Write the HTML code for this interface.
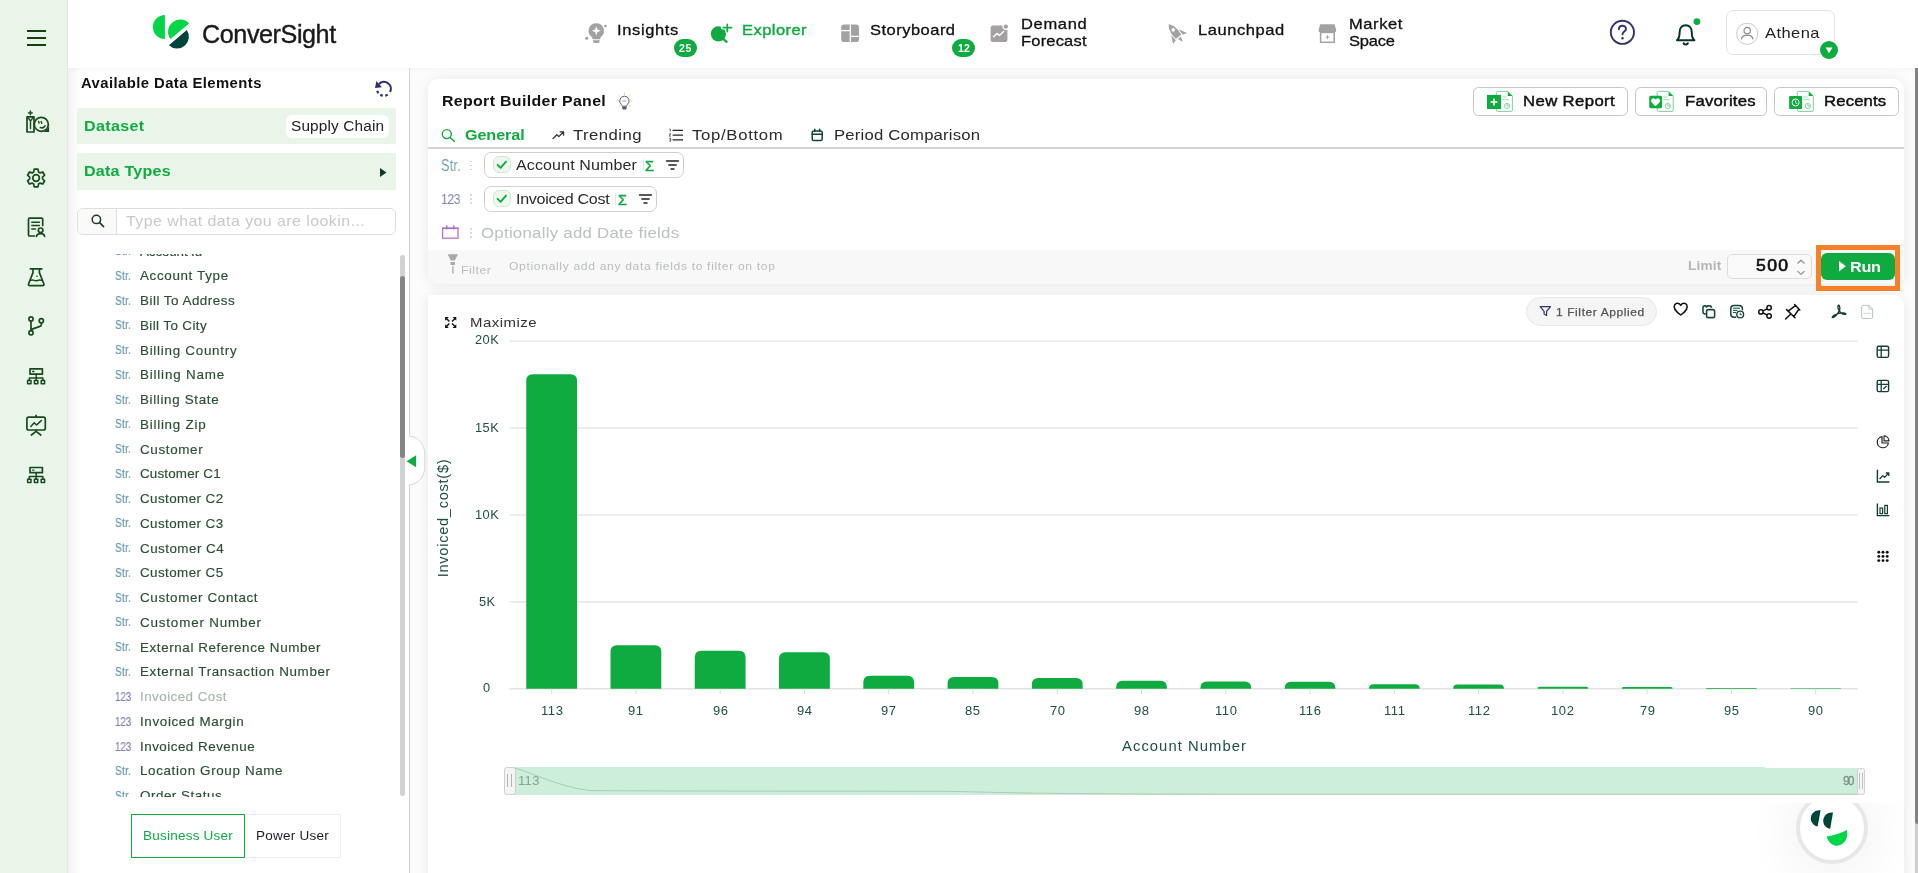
<!DOCTYPE html>
<html lang="en"><head><meta charset="utf-8"><title>ConverSight</title>
<style>
*{box-sizing:border-box;margin:0;padding:0}
html,body{width:1918px;height:873px;overflow:hidden;background:#fff;font-family:"Liberation Sans",sans-serif;color:#111}
.abs{position:absolute}
.t{position:absolute;white-space:nowrap;will-change:transform}
svg{overflow:visible}
</style></head><body>
<div id="app" style="position:absolute;left:0;top:0;width:1918px;height:873px;overflow:hidden">
<div class="abs " style="left:410.00px;top:68.00px;width:1508.00px;height:805.00px;background:#fcfcfc;"></div>
<div class="abs " style="left:68.00px;top:0.00px;width:1850.00px;height:68.00px;background:#fff;"></div>
<div class="abs " style="left:0.00px;top:0.00px;width:68.00px;height:873.00px;background:#eaf5ea;border-right:1px solid #dfeadf;z-index:3;"></div>
<div class="abs " style="left:68.00px;top:68.00px;width:342.00px;height:805.00px;background:#fff;border-right:1px solid #d6d6d6;"></div>
<div class="abs " style="left:68.00px;top:68.00px;width:13.00px;height:805.00px;background:linear-gradient(90deg,rgba(0,0,0,0.05),rgba(0,0,0,0));"></div>
<div class="abs " style="left:68.00px;top:68.00px;width:1850.00px;height:5.00px;background:linear-gradient(180deg,rgba(0,0,0,0.022),rgba(0,0,0,0));"></div>
<div class="abs " style="left:27.00px;top:29.50px;width:18.50px;height:2.00px;background:#14420f;z-index:4;"></div>
<div class="abs " style="left:27.00px;top:36.80px;width:18.50px;height:2.00px;background:#14420f;z-index:4;"></div>
<div class="abs " style="left:27.00px;top:44.00px;width:18.50px;height:2.00px;background:#14420f;z-index:4;"></div>
<svg class="abs" style="left:0.00px;top:0.00px;z-index:4;" width="68.00" height="873.00" viewBox="0 0 68 873" fill="none"><path d="M30.4 110.4 L31.1 112.2 L32.9 112.9 L31.1 113.6 L30.4 115.4 L29.7 113.6 L27.9 112.9 L29.7 112.2 Z" fill="#164a1d" stroke="#164a1d" stroke-width="0.6"/><rect x="27" y="116.8" width="7" height="15.2" stroke="#164a1d"  stroke-linecap="round" stroke-linejoin="round" fill="none" stroke-width="1.7"/><path d="M28 117.6 L30.5 121 L33 117.6 M30.5 121.6 V128.6" stroke="#164a1d"  stroke-linecap="round" stroke-linejoin="round" fill="none" stroke-width="1.4"/><circle cx="41.3" cy="124.3" r="7" stroke="#164a1d" stroke-width="1.7" stroke-linecap="round" stroke-linejoin="round" fill="none"/><path d="M49.1 124.3 V132 H41.3 A7.8 7.8 0 0 0 49.1 124.3 Z" fill="#164a1d"/><path d="M40.4 127.6 C42 128.2 44 127.6 45 125.8" stroke="#164a1d"  stroke-linecap="round" stroke-linejoin="round" fill="none" stroke-width="1.6"/><path d="M38.6 121.4 l0.5 1.6 M41.2 121.6 l0.5 1.6" stroke="#164a1d"  stroke-linecap="round" stroke-linejoin="round" fill="none" stroke-width="1.5"/><path d="M33.69 171.96 L34.23 169.20 L37.97 169.20 L38.51 171.96 L40.12 172.90 L42.79 171.98 L44.66 175.22 L42.53 177.07 L42.53 178.93 L44.66 180.78 L42.79 184.02 L40.12 183.10 L38.51 184.04 L37.97 186.80 L34.23 186.80 L33.69 184.04 L32.08 183.10 L29.41 184.02 L27.54 180.78 L29.67 178.93 L29.67 177.07 L27.54 175.22 L29.41 171.98 L32.08 172.90 Z" stroke="#164a1d" stroke-width="1.7" stroke-linecap="round" stroke-linejoin="round" fill="none"/><circle cx="36.1" cy="178" r="3.3" stroke="#164a1d" stroke-width="1.7" stroke-linecap="round" stroke-linejoin="round" fill="none"/><path d="M34.5 236 H29.6 Q28.5 236 28.5 234.9 V219.3 Q28.5 218.2 29.6 218.2 H41.6 Q42.7 218.2 42.7 219.3 V225.5" stroke="#164a1d" stroke-width="1.7" stroke-linecap="round" stroke-linejoin="round" fill="none"/><path d="M31.8 222.3 H39.4 M31.8 225.6 H39.4 M31.8 228.9 H35.4" stroke="#164a1d"  stroke-linecap="round" stroke-linejoin="round" fill="none" stroke-width="1.5"/><circle cx="40.6" cy="230.3" r="2.3" stroke="#164a1d" stroke-width="1.7" stroke-linecap="round" stroke-linejoin="round" fill="none"/><path d="M36.6 236.4 C36.8 232.6 44.4 232.6 44.6 236.4" stroke="#164a1d" stroke-width="1.7" stroke-linecap="round" stroke-linejoin="round" fill="none"/><path d="M30.4 268.9 H41.8 M33 269.2 V272.6 L28.6 283.8 Q28.1 285.6 29.9 285.6 H42.5 Q44.3 285.6 43.8 283.8 L39.4 272.6 V269.2" stroke="#164a1d" stroke-width="1.7" stroke-linecap="round" stroke-linejoin="round" fill="none"/><circle cx="37" cy="276.2" r="0.8" fill="#164a1d"/><path d="M30.6 280.4 C33 278.8 35 281.6 37.2 280.6 C38.8 279.8 40 279.6 41.6 280.4" stroke="#164a1d"  stroke-linecap="round" stroke-linejoin="round" fill="none" stroke-width="1.5"/><circle cx="31" cy="318.9" r="2.1" stroke="#164a1d" stroke-width="1.7" stroke-linecap="round" stroke-linejoin="round" fill="none"/><circle cx="31" cy="332.8" r="2.1" stroke="#164a1d" stroke-width="1.7" stroke-linecap="round" stroke-linejoin="round" fill="none"/><circle cx="41.3" cy="320.7" r="2.1" stroke="#164a1d" stroke-width="1.7" stroke-linecap="round" stroke-linejoin="round" fill="none"/><path d="M31 321 V330.7 M41.4 323 V324.6 Q41.4 326 40 326.4 L31.4 329.4" stroke="#164a1d" stroke-width="1.7" stroke-linecap="round" stroke-linejoin="round" fill="none"/><g transform="translate(0 0.0)"><rect x="30" y="368.9" width="12.4" height="5.2" stroke="#164a1d" stroke-width="1.7" stroke-linecap="round" stroke-linejoin="round" fill="none"/><path d="M32.6 371.5 h1.4" stroke="#164a1d"  stroke-linecap="round" stroke-linejoin="round" fill="none" stroke-width="1.3"/><path d="M36.2 374.2 V378 M29.3 380.4 V378 H42.9 V380.4 M36.1 378 V380.4" stroke="#164a1d"  stroke-linecap="round" stroke-linejoin="round" fill="none" stroke-width="1.5"/><rect x="27.6" y="380.6" width="3.4" height="3.2" stroke="#164a1d"  stroke-linecap="round" stroke-linejoin="round" fill="none" stroke-width="1.5"/><rect x="34.4" y="380.6" width="3.4" height="3.2" stroke="#164a1d"  stroke-linecap="round" stroke-linejoin="round" fill="none" stroke-width="1.5"/><rect x="41.2" y="380.6" width="3.4" height="3.2" stroke="#164a1d"  stroke-linecap="round" stroke-linejoin="round" fill="none" stroke-width="1.5"/></g><g transform="translate(0 98.6)"><rect x="30" y="368.9" width="12.4" height="5.2" stroke="#164a1d" stroke-width="1.7" stroke-linecap="round" stroke-linejoin="round" fill="none"/><path d="M32.6 371.5 h1.4" stroke="#164a1d"  stroke-linecap="round" stroke-linejoin="round" fill="none" stroke-width="1.3"/><path d="M36.2 374.2 V378 M29.3 380.4 V378 H42.9 V380.4 M36.1 378 V380.4" stroke="#164a1d"  stroke-linecap="round" stroke-linejoin="round" fill="none" stroke-width="1.5"/><rect x="27.6" y="380.6" width="3.4" height="3.2" stroke="#164a1d"  stroke-linecap="round" stroke-linejoin="round" fill="none" stroke-width="1.5"/><rect x="34.4" y="380.6" width="3.4" height="3.2" stroke="#164a1d"  stroke-linecap="round" stroke-linejoin="round" fill="none" stroke-width="1.5"/><rect x="41.2" y="380.6" width="3.4" height="3.2" stroke="#164a1d"  stroke-linecap="round" stroke-linejoin="round" fill="none" stroke-width="1.5"/></g><rect x="26.9" y="417.2" width="18.4" height="12.8" rx="1.8" stroke="#164a1d" stroke-width="1.7" stroke-linecap="round" stroke-linejoin="round" fill="none"/><path d="M36.1 415.4 V417 M36.1 430 V431.6 M31.4 435 L36.1 431.4 L40.8 435" stroke="#164a1d" stroke-width="1.7" stroke-linecap="round" stroke-linejoin="round" fill="none"/><path d="M30.8 426.4 L34.2 422.8 L36.6 425 L41.2 420.6" stroke="#164a1d"  stroke-linecap="round" stroke-linejoin="round" fill="none" stroke-width="1.5"/></svg>
<svg class="abs" style="left:150.00px;top:12.00px;" width="40.00" height="40.00" viewBox="0 0 40 40" fill="none"><path d="M14.9 2.9 A12.05 12.05 0 0 0 14.9 27 Z" fill="#04d648"/><path d="M20.4 27 A12.2 12.2 0 0 1 39.1 11.4 Z" fill="#04d648"/><path d="M36.8 18.1 A11.8 11.8 0 0 1 18.9 33.3 Z" fill="#00443a"/></svg>
<div class="t " style="left:201.70px;top:21.57px;font-size:25.20px;line-height:25.20px;color:#1a1a1a;letter-spacing:-0.443px;-webkit-text-stroke:0.40px #1a1a1a;">ConverSight</div>
<div class="t " style="left:617.00px;top:22.20px;font-size:15.00px;line-height:15.00px;color:#111;letter-spacing:0.579px;-webkit-text-stroke:0.30px #111;transform:scaleX(1.100);transform-origin:0 0;">Insights</div>
<div class="t " style="left:742.30px;top:22.20px;font-size:15.00px;line-height:15.00px;color:#10ab40;letter-spacing:0.407px;-webkit-text-stroke:0.40px #10ab40;transform:scaleX(1.100);transform-origin:0 0;">Explorer</div>
<div class="t " style="left:870.40px;top:22.20px;font-size:15.00px;line-height:15.00px;color:#111;letter-spacing:0.436px;-webkit-text-stroke:0.30px #111;transform:scaleX(1.100);transform-origin:0 0;">Storyboard</div>
<div class="t " style="left:1020.50px;top:16.40px;font-size:15.00px;line-height:15.00px;color:#111;letter-spacing:0.605px;-webkit-text-stroke:0.30px #111;transform:scaleX(1.100);transform-origin:0 0;">Demand</div>
<div class="t " style="left:1020.50px;top:33.30px;font-size:15.00px;line-height:15.00px;color:#111;letter-spacing:0.171px;-webkit-text-stroke:0.30px #111;transform:scaleX(1.100);transform-origin:0 0;">Forecast</div>
<div class="t " style="left:1197.90px;top:22.20px;font-size:15.00px;line-height:15.00px;color:#111;letter-spacing:0.526px;-webkit-text-stroke:0.30px #111;transform:scaleX(1.100);transform-origin:0 0;">Launchpad</div>
<div class="t " style="left:1348.60px;top:16.40px;font-size:15.00px;line-height:15.00px;color:#111;letter-spacing:0.526px;-webkit-text-stroke:0.30px #111;transform:scaleX(1.100);transform-origin:0 0;">Market</div>
<div class="t " style="left:1348.60px;top:33.30px;font-size:15.00px;line-height:15.00px;color:#111;letter-spacing:-0.222px;-webkit-text-stroke:0.30px #111;transform:scaleX(1.100);transform-origin:0 0;">Space</div>
<svg class="abs" style="left:0.00px;top:0.00px;" width="1918.00" height="68.00" viewBox="0 0 1918 68" fill="none"><path d="M596.3 23.2 A7.6 7.6 0 0 0 591.2 36.5 C592.2 37.5 592.6 38.3 592.7 39.3 H599.9 C600 38.3 600.4 37.5 601.4 36.5 A7.6 7.6 0 0 0 596.3 23.2 Z" fill="#a3a1a2"/><path d="M592.9 40.3 H599.7 V41 Q599.7 42.9 597.8 42.9 H594.8 Q592.9 42.9 592.9 41 Z" fill="#a3a1a2"/><path d="M596.3 26.2 L597.5 29.6 L600.9 30.8 L597.5 32 L596.3 35.4 L595.1 32 L591.7 30.8 L595.1 29.6 Z" fill="#fff"/><circle cx="605.4" cy="26" r="1.35" fill="#a3a1a2"/><circle cx="586.7" cy="38.2" r="1.55" fill="#a3a1a2"/><circle cx="718.4" cy="33.8" r="7.6" fill="#10ab40"/><path d="M723 38.6 L726.6 41.8" stroke="#10ab40" stroke-width="2.4" stroke-linecap="round"/><path d="M727.3 24 V32 M722.6 27.6 H732" stroke="#fff" stroke-width="3.6" stroke-linecap="round"/><path d="M727.3 24.4 V31.6 M723.2 27.6 H731.6" stroke="#10ab40" stroke-width="1.7" stroke-linecap="round"/><rect x="841.2" y="24.4" width="17.8" height="17.6" rx="2.8" fill="#a3a1a2"/><path d="M850.3 24.4 V42 M841.2 30.7 H850.3 M850.3 36.4 H859" stroke="#fff" stroke-width="1.3"/><rect x="990.6" y="25.4" width="16.8" height="16.6" rx="2.6" fill="#a3a1a2"/><circle cx="1005.8" cy="26.6" r="3.4" fill="#fff"/><circle cx="1005.8" cy="26.6" r="2.2" fill="#a3a1a2"/><path d="M993.6 36.8 L997 33.4 L999.4 35.4 L1003.6 31.4" stroke="#fff" stroke-width="1.4" fill="none" stroke-linecap="round" stroke-linejoin="round"/><g transform="translate(1175.9 33.3) rotate(-38)"><path d="M0 -11.6 C3.7 -8 4.3 -1 3.3 4.4 H-3.3 C-4.3 -1 -3.7 -8 0 -11.6 Z" fill="#a3a1a2"/><circle cx="0" cy="-4.4" r="1.75" fill="#fff"/><path d="M-4.7 -1.4 L-8.8 6.6 L-4.4 5.4 Z M4.7 -1.4 L8.8 6.6 L4.4 5.4 Z M-1.9 5.8 H1.9 L0.4 10.2 H-0.4 Z" fill="#a3a1a2"/></g><path d="M1320.3 24.2 H1334.5 L1336.1 29.4 V31 Q1336.1 32.2 1334.9 32.2 H1319.9 Q1318.7 32.2 1318.7 31 V29.4 Z" fill="#a3a1a2"/><rect x="1320.6" y="32.4" width="13.6" height="9.9" stroke="#a3a1a2" stroke-width="1.5" fill="none"/><path d="M1327.4 34.6 L1328 36.6 L1330 37.2 L1328 37.8 L1327.4 39.8 L1326.8 37.8 L1324.8 37.2 L1326.8 36.6 Z" fill="#a3a1a2"/><circle cx="1622.4" cy="32.3" r="11.6" stroke="#2e3470" stroke-width="1.9" fill="none"/><path d="M1618.9 29.3 C1618.9 24.6 1626 24.6 1626 29 C1626 31.6 1622.5 31.6 1622.5 34.4" stroke="#2e3470" stroke-width="1.9" fill="none" stroke-linecap="round"/><circle cx="1622.5" cy="38.2" r="1.2" fill="#2e3470"/><path d="M1677 40.2 C1679.4 38 1679.6 36 1679.6 32.4 C1679.6 28 1682 25.2 1685.7 25.2 C1689.4 25.2 1691.8 28 1691.8 32.4 C1691.8 36 1692 38 1694.4 40.2 Z" stroke="#0a3328" stroke-width="2" fill="none" stroke-linejoin="round"/><path d="M1683.6 43.4 C1684.6 45 1686.8 45 1687.8 43.4" stroke="#0a3328" stroke-width="2" fill="none" stroke-linecap="round"/><circle cx="1696.9" cy="21.6" r="3.4" fill="#10ab40"/></svg>
<div class="abs " style="left:674.40px;top:39.00px;width:22.50px;height:17.70px;background:#10ab40;border-radius:9px;"></div>
<div class="t " style="left:679.40px;top:42.81px;font-size:10.50px;line-height:10.50px;color:#fff;font-weight:700;letter-spacing:0.745px;">25</div>
<div class="abs " style="left:952.20px;top:39.00px;width:22.50px;height:17.70px;background:#10ab40;border-radius:9px;"></div>
<div class="t " style="left:957.60px;top:42.81px;font-size:10.50px;line-height:10.50px;color:#fff;font-weight:700;letter-spacing:0.145px;">12</div>
<div class="abs " style="left:1726.40px;top:10.30px;width:108.40px;height:44.50px;border:1px solid #e2e2e2;border-radius:7px;background:#fff;"></div>
<svg class="abs" style="left:1735.00px;top:22.00px;" width="24.00" height="24.00" viewBox="0 0 24 24" fill="none"><circle cx="12.2" cy="11.8" r="10.6" stroke="#c4c4c4" stroke-width="0.9"/><circle cx="12.2" cy="8.6" r="3.2" stroke="#8d8d8d" stroke-width="1.2"/><path d="M6.4 17.4 C6.8 11.6 17.6 11.6 18 17.4" stroke="#8d8d8d" stroke-width="1.2"/></svg>
<div class="t " style="left:1764.80px;top:25.40px;font-size:15.00px;line-height:15.00px;color:#222;letter-spacing:0.384px;transform:scaleX(1.100);transform-origin:0 0;">Athena</div>
<div class="abs " style="left:1820.00px;top:40.90px;width:18.00px;height:18.00px;background:#10ab40;border-radius:50%;"></div>
<svg class="abs" style="left:1820.00px;top:40.90px;" width="18.00" height="18.00" viewBox="0 0 18 18" fill="none"><path d="M5.6 6.6 h6.8 L9 12.2 Z" fill="#fff"/></svg>
<div class="t " style="left:81.00px;top:75.95px;font-size:14.00px;line-height:14.00px;color:#111;font-weight:700;letter-spacing:0.402px;transform:scaleX(1.060);transform-origin:0 0;">Available Data Elements</div>
<svg class="abs" style="left:375.00px;top:80.00px;" width="18.00" height="18.00" viewBox="0 0 18 18" fill="none"><path d="M3.99 3.89 A6.95 6.95 0 0 1 15.04 12.06" stroke="#2b3170" stroke-width="2.1" fill="none"/><path d="M12.69 14.63 A6.95 6.95 0 0 1 10.23 15.62" stroke="#2b3170" stroke-width="2.1" fill="none"/><path d="M7.81 15.66 A6.95 6.95 0 0 1 5.32 14.76" stroke="#2b3170" stroke-width="2.1" fill="none"/><path d="M3.50 13.17 A6.95 6.95 0 0 1 2.25 10.83" stroke="#2b3170" stroke-width="2.1" fill="none"/><path d="M1.4 1 L0 7.9 L6.9 7.2 Z" fill="#2b3170"/></svg>
<div class="abs " style="left:77.00px;top:108.00px;width:319.00px;height:36.00px;background:#eaf5ea;"></div>
<div class="t " style="left:83.70px;top:118.23px;font-size:15.20px;line-height:15.20px;color:#10ab40;font-weight:700;letter-spacing:0.323px;transform:scaleX(1.060);transform-origin:0 0;">Dataset</div>
<div class="abs " style="left:286.00px;top:115.00px;width:103.00px;height:23.00px;background:#fff;border-radius:6px;"></div>
<div class="t " style="left:291.20px;top:119.15px;font-size:14.00px;line-height:14.00px;color:#222;letter-spacing:0.121px;transform:scaleX(1.100);transform-origin:0 0;">Supply Chain</div>
<div class="abs " style="left:77.00px;top:153.00px;width:319.00px;height:37.00px;background:#eaf5ea;"></div>
<div class="t " style="left:83.70px;top:163.23px;font-size:15.20px;line-height:15.20px;color:#10ab40;font-weight:700;letter-spacing:0.215px;transform:scaleX(1.060);transform-origin:0 0;">Data Types</div>
<svg class="abs" style="left:380.00px;top:168.00px;" width="6.50" height="9.00" viewBox="0 0 6.5 9" fill="none"><path d="M0 0 L6.5 4.5 L0 9 Z" fill="#0b3b2c"/></svg>
<div class="abs " style="left:77.20px;top:208.40px;width:318.50px;height:26.20px;border:1px solid #dedede;border-radius:6px;background:#fff;overflow:hidden;"><div style="position:absolute;left:0;top:0;width:39px;height:100%;background:#fafafa;border-right:1px solid #dedede"></div></div>
<svg class="abs" style="left:90.50px;top:214.30px;" width="13.50" height="13.50" viewBox="0 0 13.5 13.5" fill="none"><circle cx="5.4" cy="5.4" r="4.2" stroke="#1d3b1d" stroke-width="1.5"/><path d="M8.6 8.6 L12.6 12.6" stroke="#1d3b1d" stroke-width="1.6" stroke-linecap="round"/></svg>
<div class="t " style="left:126.00px;top:213.73px;font-size:14.50px;line-height:14.50px;color:#c9c9c9;letter-spacing:0.395px;transform:scaleX(1.100);transform-origin:0 0;">Type what data you are lookin...</div>
<div class="abs" style="left:100px;top:254.2px;width:298px;height:542.8px;overflow:hidden">
<div class="t " style="left:14.70px;top:-8.99px;font-size:12.80px;line-height:12.80px;color:#6298b0;letter-spacing:0.308px;-webkit-text-stroke:0.15px #6298b0;transform:scaleX(0.800);transform-origin:0 0;">Str.</div>
<div class="t " style="left:39.80px;top:-8.48px;font-size:12.20px;line-height:12.20px;color:#2a4f33;letter-spacing:-0.122px;-webkit-text-stroke:0.15px #2a4f33;transform:scaleX(1.100);transform-origin:0 0;">Account Id</div>
<div class="t " style="left:14.70px;top:15.76px;font-size:12.80px;line-height:12.80px;color:#6298b0;letter-spacing:0.308px;-webkit-text-stroke:0.15px #6298b0;transform:scaleX(0.800);transform-origin:0 0;">Str.</div>
<div class="t " style="left:39.80px;top:16.27px;font-size:12.20px;line-height:12.20px;color:#2a4f33;letter-spacing:0.590px;-webkit-text-stroke:0.15px #2a4f33;transform:scaleX(1.100);transform-origin:0 0;">Account Type</div>
<div class="t " style="left:14.70px;top:40.51px;font-size:12.80px;line-height:12.80px;color:#6298b0;letter-spacing:0.308px;-webkit-text-stroke:0.15px #6298b0;transform:scaleX(0.800);transform-origin:0 0;">Str.</div>
<div class="t " style="left:39.80px;top:41.02px;font-size:12.20px;line-height:12.20px;color:#2a4f33;letter-spacing:0.450px;-webkit-text-stroke:0.15px #2a4f33;transform:scaleX(1.100);transform-origin:0 0;">Bill To Address</div>
<div class="t " style="left:14.70px;top:65.26px;font-size:12.80px;line-height:12.80px;color:#6298b0;letter-spacing:0.308px;-webkit-text-stroke:0.15px #6298b0;transform:scaleX(0.800);transform-origin:0 0;">Str.</div>
<div class="t " style="left:39.80px;top:65.77px;font-size:12.20px;line-height:12.20px;color:#2a4f33;letter-spacing:0.355px;-webkit-text-stroke:0.15px #2a4f33;transform:scaleX(1.100);transform-origin:0 0;">Bill To City</div>
<div class="t " style="left:14.70px;top:90.01px;font-size:12.80px;line-height:12.80px;color:#6298b0;letter-spacing:0.308px;-webkit-text-stroke:0.15px #6298b0;transform:scaleX(0.800);transform-origin:0 0;">Str.</div>
<div class="t " style="left:39.80px;top:90.52px;font-size:12.20px;line-height:12.20px;color:#2a4f33;letter-spacing:0.659px;-webkit-text-stroke:0.15px #2a4f33;transform:scaleX(1.100);transform-origin:0 0;">Billing Country</div>
<div class="t " style="left:14.70px;top:114.76px;font-size:12.80px;line-height:12.80px;color:#6298b0;letter-spacing:0.308px;-webkit-text-stroke:0.15px #6298b0;transform:scaleX(0.800);transform-origin:0 0;">Str.</div>
<div class="t " style="left:39.80px;top:115.27px;font-size:12.20px;line-height:12.20px;color:#2a4f33;letter-spacing:0.731px;-webkit-text-stroke:0.15px #2a4f33;transform:scaleX(1.100);transform-origin:0 0;">Billing Name</div>
<div class="t " style="left:14.70px;top:139.51px;font-size:12.80px;line-height:12.80px;color:#6298b0;letter-spacing:0.308px;-webkit-text-stroke:0.15px #6298b0;transform:scaleX(0.800);transform-origin:0 0;">Str.</div>
<div class="t " style="left:39.80px;top:140.02px;font-size:12.20px;line-height:12.20px;color:#2a4f33;letter-spacing:0.594px;-webkit-text-stroke:0.15px #2a4f33;transform:scaleX(1.100);transform-origin:0 0;">Billing State</div>
<div class="t " style="left:14.70px;top:164.26px;font-size:12.80px;line-height:12.80px;color:#6298b0;letter-spacing:0.308px;-webkit-text-stroke:0.15px #6298b0;transform:scaleX(0.800);transform-origin:0 0;">Str.</div>
<div class="t " style="left:39.80px;top:164.77px;font-size:12.20px;line-height:12.20px;color:#2a4f33;letter-spacing:0.684px;-webkit-text-stroke:0.15px #2a4f33;transform:scaleX(1.100);transform-origin:0 0;">Billing Zip</div>
<div class="t " style="left:14.70px;top:189.01px;font-size:12.80px;line-height:12.80px;color:#6298b0;letter-spacing:0.308px;-webkit-text-stroke:0.15px #6298b0;transform:scaleX(0.800);transform-origin:0 0;">Str.</div>
<div class="t " style="left:39.80px;top:189.52px;font-size:12.20px;line-height:12.20px;color:#2a4f33;letter-spacing:0.588px;-webkit-text-stroke:0.15px #2a4f33;transform:scaleX(1.100);transform-origin:0 0;">Customer</div>
<div class="t " style="left:14.70px;top:213.76px;font-size:12.80px;line-height:12.80px;color:#6298b0;letter-spacing:0.308px;-webkit-text-stroke:0.15px #6298b0;transform:scaleX(0.800);transform-origin:0 0;">Str.</div>
<div class="t " style="left:39.80px;top:214.27px;font-size:12.20px;line-height:12.20px;color:#2a4f33;letter-spacing:0.151px;-webkit-text-stroke:0.15px #2a4f33;transform:scaleX(1.100);transform-origin:0 0;">Customer C1</div>
<div class="t " style="left:14.70px;top:238.51px;font-size:12.80px;line-height:12.80px;color:#6298b0;letter-spacing:0.308px;-webkit-text-stroke:0.15px #6298b0;transform:scaleX(0.800);transform-origin:0 0;">Str.</div>
<div class="t " style="left:39.80px;top:239.02px;font-size:12.20px;line-height:12.20px;color:#2a4f33;letter-spacing:0.378px;-webkit-text-stroke:0.15px #2a4f33;transform:scaleX(1.100);transform-origin:0 0;">Customer C2</div>
<div class="t " style="left:14.70px;top:263.26px;font-size:12.80px;line-height:12.80px;color:#6298b0;letter-spacing:0.308px;-webkit-text-stroke:0.15px #6298b0;transform:scaleX(0.800);transform-origin:0 0;">Str.</div>
<div class="t " style="left:39.80px;top:263.77px;font-size:12.20px;line-height:12.20px;color:#2a4f33;letter-spacing:0.378px;-webkit-text-stroke:0.15px #2a4f33;transform:scaleX(1.100);transform-origin:0 0;">Customer C3</div>
<div class="t " style="left:14.70px;top:288.01px;font-size:12.80px;line-height:12.80px;color:#6298b0;letter-spacing:0.308px;-webkit-text-stroke:0.15px #6298b0;transform:scaleX(0.800);transform-origin:0 0;">Str.</div>
<div class="t " style="left:39.80px;top:288.52px;font-size:12.20px;line-height:12.20px;color:#2a4f33;letter-spacing:0.423px;-webkit-text-stroke:0.15px #2a4f33;transform:scaleX(1.100);transform-origin:0 0;">Customer C4</div>
<div class="t " style="left:14.70px;top:312.76px;font-size:12.80px;line-height:12.80px;color:#6298b0;letter-spacing:0.308px;-webkit-text-stroke:0.15px #6298b0;transform:scaleX(0.800);transform-origin:0 0;">Str.</div>
<div class="t " style="left:39.80px;top:313.27px;font-size:12.20px;line-height:12.20px;color:#2a4f33;letter-spacing:0.378px;-webkit-text-stroke:0.15px #2a4f33;transform:scaleX(1.100);transform-origin:0 0;">Customer C5</div>
<div class="t " style="left:14.70px;top:337.51px;font-size:12.80px;line-height:12.80px;color:#6298b0;letter-spacing:0.308px;-webkit-text-stroke:0.15px #6298b0;transform:scaleX(0.800);transform-origin:0 0;">Str.</div>
<div class="t " style="left:39.80px;top:338.02px;font-size:12.20px;line-height:12.20px;color:#2a4f33;letter-spacing:0.578px;-webkit-text-stroke:0.15px #2a4f33;transform:scaleX(1.100);transform-origin:0 0;">Customer Contact</div>
<div class="t " style="left:14.70px;top:362.26px;font-size:12.80px;line-height:12.80px;color:#6298b0;letter-spacing:0.308px;-webkit-text-stroke:0.15px #6298b0;transform:scaleX(0.800);transform-origin:0 0;">Str.</div>
<div class="t " style="left:39.80px;top:362.77px;font-size:12.20px;line-height:12.20px;color:#2a4f33;letter-spacing:0.751px;-webkit-text-stroke:0.15px #2a4f33;transform:scaleX(1.100);transform-origin:0 0;">Customer Number</div>
<div class="t " style="left:14.70px;top:387.01px;font-size:12.80px;line-height:12.80px;color:#6298b0;letter-spacing:0.308px;-webkit-text-stroke:0.15px #6298b0;transform:scaleX(0.800);transform-origin:0 0;">Str.</div>
<div class="t " style="left:39.80px;top:387.52px;font-size:12.20px;line-height:12.20px;color:#2a4f33;letter-spacing:0.544px;-webkit-text-stroke:0.15px #2a4f33;transform:scaleX(1.100);transform-origin:0 0;">External Reference Number</div>
<div class="t " style="left:14.70px;top:411.76px;font-size:12.80px;line-height:12.80px;color:#6298b0;letter-spacing:0.308px;-webkit-text-stroke:0.15px #6298b0;transform:scaleX(0.800);transform-origin:0 0;">Str.</div>
<div class="t " style="left:39.80px;top:412.27px;font-size:12.20px;line-height:12.20px;color:#2a4f33;letter-spacing:0.574px;-webkit-text-stroke:0.15px #2a4f33;transform:scaleX(1.100);transform-origin:0 0;">External Transaction Number</div>
<div class="t " style="left:14.70px;top:436.85px;font-size:12.40px;line-height:12.40px;color:#7f80b6;letter-spacing:-0.167px;-webkit-text-stroke:0.15px #7f80b6;transform:scaleX(0.800);transform-origin:0 0;">123</div>
<div class="t " style="left:39.80px;top:437.02px;font-size:12.20px;line-height:12.20px;color:#a9b7ab;letter-spacing:0.407px;-webkit-text-stroke:0.15px #a9b7ab;transform:scaleX(1.100);transform-origin:0 0;">Invoiced Cost</div>
<div class="t " style="left:14.70px;top:461.60px;font-size:12.40px;line-height:12.40px;color:#7f80b6;letter-spacing:-0.167px;-webkit-text-stroke:0.15px #7f80b6;transform:scaleX(0.800);transform-origin:0 0;">123</div>
<div class="t " style="left:39.80px;top:461.77px;font-size:12.20px;line-height:12.20px;color:#2a4f33;letter-spacing:0.581px;-webkit-text-stroke:0.15px #2a4f33;transform:scaleX(1.100);transform-origin:0 0;">Invoiced Margin</div>
<div class="t " style="left:14.70px;top:486.35px;font-size:12.40px;line-height:12.40px;color:#7f80b6;letter-spacing:-0.167px;-webkit-text-stroke:0.15px #7f80b6;transform:scaleX(0.800);transform-origin:0 0;">123</div>
<div class="t " style="left:39.80px;top:486.52px;font-size:12.20px;line-height:12.20px;color:#2a4f33;letter-spacing:0.441px;-webkit-text-stroke:0.15px #2a4f33;transform:scaleX(1.100);transform-origin:0 0;">Invoiced Revenue</div>
<div class="t " style="left:14.70px;top:510.76px;font-size:12.80px;line-height:12.80px;color:#6298b0;letter-spacing:0.308px;-webkit-text-stroke:0.15px #6298b0;transform:scaleX(0.800);transform-origin:0 0;">Str.</div>
<div class="t " style="left:39.80px;top:511.27px;font-size:12.20px;line-height:12.20px;color:#2a4f33;letter-spacing:0.575px;-webkit-text-stroke:0.15px #2a4f33;transform:scaleX(1.100);transform-origin:0 0;">Location Group Name</div>
<div class="t " style="left:14.70px;top:535.51px;font-size:12.80px;line-height:12.80px;color:#6298b0;letter-spacing:0.308px;-webkit-text-stroke:0.15px #6298b0;transform:scaleX(0.800);transform-origin:0 0;">Str.</div>
<div class="t " style="left:39.80px;top:536.02px;font-size:12.20px;line-height:12.20px;color:#2a4f33;letter-spacing:0.464px;-webkit-text-stroke:0.15px #2a4f33;transform:scaleX(1.100);transform-origin:0 0;">Order Status</div>
</div>
<div class="abs " style="left:400.00px;top:255.00px;width:5.00px;height:541.00px;background:#d2d2d2;border-radius:3px;"></div>
<div class="abs " style="left:400.00px;top:276.00px;width:5.00px;height:181.50px;background:#858585;border-radius:3px;"></div>
<svg class="abs" style="left:403.00px;top:430.00px;z-index:5;" width="30.00" height="60.00" viewBox="0 0 30 60" fill="none"><path d="M6.4 6.2 C16 6.2 21.8 16 21.8 24 V37 C21.8 45 16 54.7 6.4 54.7 Z" fill="#fff" stroke="#d6d6d6" stroke-width="1"/><path d="M6.4 6.8 V54.2" stroke="#fff" stroke-width="1.4"/><path d="M3.6 31.3 L13.1 25.3 V37.2 Z" fill="#10ab40"/></svg>
<div class="abs " style="left:131.00px;top:814.10px;width:113.90px;height:43.60px;border:1.8px solid #10ab40;background:#fff;"></div>
<div class="t " style="left:143.20px;top:830.19px;font-size:12.30px;line-height:12.30px;color:#10ab40;letter-spacing:0.197px;transform:scaleX(1.100);transform-origin:0 0;">Business User</div>
<div class="abs " style="left:244.90px;top:814.10px;width:96.00px;height:43.60px;border:1.8px solid #efefef;background:#fff;"></div>
<div class="t " style="left:256.00px;top:830.19px;font-size:12.30px;line-height:12.30px;color:#1e1e2a;letter-spacing:0.213px;transform:scaleX(1.100);transform-origin:0 0;">Power User</div>
<div class="abs " style="left:428.00px;top:79.30px;width:1476.00px;height:205.00px;background:#fff;border-radius:11px;box-shadow:0 1px 13px rgba(0,0,0,0.085);overflow:hidden;"><div style="position:absolute;left:0;top:170.8px;width:100%;height:34.2px;background:#f8f8f8"></div><div style="position:absolute;left:0;top:67.4px;width:100%;height:2px;background:#d3d3d3"></div></div>
<div class="t " style="left:441.50px;top:93.45px;font-size:15.30px;line-height:15.30px;color:#111;font-weight:700;letter-spacing:0.325px;transform:scaleX(1.040);transform-origin:0 0;">Report Builder Panel</div>
<svg class="abs" style="left:616.00px;top:92.00px;" width="18.00" height="20.00" viewBox="0 0 18 20" fill="none"><path d="M8.4 0.6 v1.8 M2.6 3.2 l1.3 1.3 M14.2 3.2 l-1.3 1.3 M0.6 8.8 h1.8 M14.4 8.8 h1.8 M2.8 14 l1.2 -1.2 M14 14 l-1.2 -1.2" stroke="#f3c79b" stroke-width="0.9" stroke-linecap="round"/><path d="M8.4 4.2 A4.7 4.7 0 0 0 5.4 12.5 C6 13.1 6.2 13.6 6.2 14.2 H10.6 C10.6 13.6 10.8 13.1 11.4 12.5 A4.7 4.7 0 0 0 8.4 4.2 Z" stroke="#666" stroke-width="1" fill="#fff"/><path d="M6.6 9 H10.2" stroke="#888" stroke-width="0.8"/><path d="M6.2 14.8 H10.6 V16 Q10.6 17.6 9 17.6 H7.8 Q6.2 17.6 6.2 16 Z" fill="#5a5a5a"/></svg>
<svg class="abs" style="left:0.00px;top:0.00px;" width="1918.00" height="300.00" viewBox="0 0 1918 300" fill="none"><circle cx="446.8" cy="134.1" r="4.5" stroke="#10ab40" stroke-width="1.4" fill="none"/><path d="M450.2 137.5 L454.2 141.2" stroke="#10ab40" stroke-width="1.5" stroke-linecap="round"/><path d="M553 138.6 L556.8 134.8 L558.8 136.6 L563.2 132.2 M560.2 131.8 H563.6 V135.2" stroke="#333" stroke-width="1.3" fill="none" stroke-linejoin="round" stroke-linecap="round"/><path d="M672.6 130.4 H683 M672.6 135.1 H683 M672.6 139.8 H683" stroke="#222" stroke-width="1.35"/><path d="M669.4 129 h0.9 v2.6 M669.2 133.8 h1.5 l-1.5 2.4 h1.6 M669.2 138.4 h1.5 v1.4 h-1 M670.7 139.8 v1.4 h-1.5" stroke="#222" stroke-width="0.7" fill="none"/><rect x="812.2" y="130.9" width="10" height="9.6" rx="1.6" stroke="#14443a" stroke-width="1.5" fill="none"/><path d="M812.2 134.3 H822.2 M814.8 129.2 V131.6 M819.6 129.2 V131.6" stroke="#14443a" stroke-width="1.5" stroke-linecap="round"/><rect x="442.6" y="228.2" width="15.4" height="10" stroke="#b06bc5" stroke-width="1.2" fill="none"/><path d="M442 227.6 H458.6 V229 H442 Z" fill="#b06bc5"/><path d="M446.8 225.2 V229.4 M453.8 225.2 V229.4" stroke="#b06bc5" stroke-width="1.3"/><path d="M447.6 254.2 H458 L454.8 260.6 H450.8 Z" fill="#a9a9a9"/><rect x="450.6" y="262" width="4.4" height="3" fill="#a9a9a9"/><rect x="452.1" y="266.2" width="1.5" height="7.4" fill="#b5b5b5"/></svg>
<div class="t " style="left:464.90px;top:127.13px;font-size:15.20px;line-height:15.20px;color:#10ab40;font-weight:700;letter-spacing:-0.050px;transform:scaleX(1.060);transform-origin:0 0;">General</div>
<div class="t " style="left:573.30px;top:127.13px;font-size:15.20px;line-height:15.20px;color:#2b2b2b;letter-spacing:0.406px;transform:scaleX(1.100);transform-origin:0 0;">Trending</div>
<div class="t " style="left:692.20px;top:127.13px;font-size:15.20px;line-height:15.20px;color:#2b2b2b;letter-spacing:0.626px;transform:scaleX(1.100);transform-origin:0 0;">Top/Bottom</div>
<div class="t " style="left:833.80px;top:127.13px;font-size:15.20px;line-height:15.20px;color:#2b2b2b;letter-spacing:0.175px;transform:scaleX(1.100);transform-origin:0 0;">Period Comparison</div>
<div class="t " style="left:440.70px;top:157.66px;font-size:16.00px;line-height:16.00px;color:#6a9fb2;letter-spacing:0.208px;transform:scaleX(0.800);transform-origin:0 0;">Str.</div>
<div class="t " style="left:440.70px;top:191.36px;font-size:15.40px;line-height:15.40px;color:#8486b8;letter-spacing:-0.672px;transform:scaleX(0.800);transform-origin:0 0;">123</div>
<div class="abs " style="left:470.10px;top:160.60px;width:1.80px;height:1.80px;background:#cfcfcf;border-radius:50%;"></div>
<div class="abs " style="left:470.10px;top:164.60px;width:1.80px;height:1.80px;background:#cfcfcf;border-radius:50%;"></div>
<div class="abs " style="left:470.10px;top:168.60px;width:1.80px;height:1.80px;background:#cfcfcf;border-radius:50%;"></div>
<div class="abs " style="left:470.10px;top:194.10px;width:1.80px;height:1.80px;background:#cfcfcf;border-radius:50%;"></div>
<div class="abs " style="left:470.10px;top:198.10px;width:1.80px;height:1.80px;background:#cfcfcf;border-radius:50%;"></div>
<div class="abs " style="left:470.10px;top:202.10px;width:1.80px;height:1.80px;background:#cfcfcf;border-radius:50%;"></div>
<div class="abs " style="left:470.10px;top:227.90px;width:1.80px;height:1.80px;background:#cfcfcf;border-radius:50%;"></div>
<div class="abs " style="left:470.10px;top:231.90px;width:1.80px;height:1.80px;background:#cfcfcf;border-radius:50%;"></div>
<div class="abs " style="left:470.10px;top:235.90px;width:1.80px;height:1.80px;background:#cfcfcf;border-radius:50%;"></div>
<div class="abs " style="left:484.30px;top:152.40px;width:199.60px;height:25.20px;border:1px solid #cfcfcf;border-radius:7px;background:#fff;"></div>
<div class="abs " style="left:484.30px;top:186.40px;width:172.60px;height:25.20px;border:1px solid #cfcfcf;border-radius:7px;background:#fff;"></div>
<div class="abs " style="left:493.10px;top:156.40px;width:17.60px;height:17.00px;border:1px solid #cdeacf;border-radius:6px;background:#eef8ef;"></div>
<svg class="abs" style="left:493.10px;top:156.40px;" width="17.60" height="17.00" viewBox="0 0 17.6 17" fill="none"><path d="M4.6 8.8 L7.6 11.8 L13 5.6" stroke="#10ab40" stroke-width="1.9" stroke-linecap="round" stroke-linejoin="round"/></svg>
<div class="abs " style="left:493.10px;top:190.40px;width:17.60px;height:17.00px;border:1px solid #cdeacf;border-radius:6px;background:#eef8ef;"></div>
<svg class="abs" style="left:493.10px;top:190.40px;" width="17.60" height="17.00" viewBox="0 0 17.6 17" fill="none"><path d="M4.6 8.8 L7.6 11.8 L13 5.6" stroke="#10ab40" stroke-width="1.9" stroke-linecap="round" stroke-linejoin="round"/></svg>
<div class="t " style="left:515.80px;top:158.04px;font-size:14.60px;line-height:14.60px;color:#2b2b2b;letter-spacing:0.095px;transform:scaleX(1.100);transform-origin:0 0;">Account Number</div>
<div class="t " style="left:515.80px;top:191.64px;font-size:14.60px;line-height:14.60px;color:#2b2b2b;letter-spacing:-0.275px;transform:scaleX(1.100);transform-origin:0 0;">Invoiced Cost</div>
<div class="t " style="left:644.80px;top:159.14px;font-size:14.60px;line-height:14.60px;color:#10ab40;letter-spacing:1.348px;-webkit-text-stroke:0.45px #10ab40;">Σ</div>
<div class="abs " style="left:642.60px;top:159.00px;width:1.00px;height:12.00px;background:#e4e4e4;"></div>
<div class="t " style="left:617.90px;top:192.74px;font-size:14.60px;line-height:14.60px;color:#10ab40;letter-spacing:1.448px;-webkit-text-stroke:0.45px #10ab40;">Σ</div>
<div class="abs " style="left:615.40px;top:193.00px;width:1.00px;height:12.00px;background:#e4e4e4;"></div>
<svg class="abs" style="left:666.20px;top:160.40px;" width="13.00" height="10.00" viewBox="0 0 13 10" fill="none"><path d="M0.5 1 H12.5 M2.8 5 H10.2 M5 9 H8" stroke="#222" stroke-width="1.35" stroke-linecap="round"/></svg>
<svg class="abs" style="left:638.80px;top:194.00px;" width="13.00" height="10.00" viewBox="0 0 13 10" fill="none"><path d="M0.5 1 H12.5 M2.8 5 H10.2 M5 9 H8" stroke="#222" stroke-width="1.35" stroke-linecap="round"/></svg>
<div class="t " style="left:480.70px;top:224.95px;font-size:15.30px;line-height:15.30px;color:#bcc2bd;letter-spacing:0.230px;transform:scaleX(1.100);transform-origin:0 0;">Optionally add Date fields</div>
<div class="t " style="left:460.80px;top:264.99px;font-size:11.00px;line-height:11.00px;color:#b9beba;letter-spacing:0.516px;transform:scaleX(1.100);transform-origin:0 0;">Filter</div>
<div class="t " style="left:509.10px;top:261.29px;font-size:11.00px;line-height:11.00px;color:#b9beba;letter-spacing:0.603px;transform:scaleX(1.100);transform-origin:0 0;">Optionally add any data fields to filter on top</div>
<div class="t " style="left:1688.40px;top:259.40px;font-size:13.00px;line-height:13.00px;color:#b5b5b5;font-weight:700;letter-spacing:0.161px;transform:scaleX(1.050);transform-origin:0 0;">Limit</div>
<div class="abs " style="left:1727.40px;top:254.30px;width:84.20px;height:24.60px;border:1px solid #dcdcdc;border-radius:5px;background:#f9f9f9;"></div>
<div class="t " style="left:1755.90px;top:258.26px;font-size:16.00px;line-height:16.00px;color:#111;letter-spacing:1.231px;-webkit-text-stroke:0.65px #111;transform:scaleX(1.100);transform-origin:0 0;">500</div>
<svg class="abs" style="left:1797.00px;top:258.00px;" width="8.00" height="18.00" viewBox="0 0 8 18" fill="none"><path d="M0.8 5.2 L4 2.2 L7.2 5.2 M0.8 13.4 L4 16.4 L7.2 13.4" stroke="#8f8f8f" stroke-width="1.2" stroke-linecap="round" stroke-linejoin="round"/></svg>
<div class="abs " style="left:1816.20px;top:244.80px;width:84.00px;height:46.00px;border:5px solid #f9802a;"></div>
<div class="abs " style="left:1821.30px;top:253.00px;width:74.20px;height:27.00px;background:#10ab40;border-radius:6px;"></div>
<svg class="abs" style="left:1839.00px;top:261.20px;" width="6.80" height="10.60" viewBox="0 0 6.8 10.6" fill="none"><path d="M0 0 L6.8 5.3 L0 10.6 Z" fill="#fff"/></svg>
<div class="t " style="left:1849.80px;top:259.16px;font-size:15.40px;line-height:15.40px;color:#fff;font-weight:700;letter-spacing:-0.215px;transform:scaleX(1.050);transform-origin:0 0;">Run</div>
<div class="abs " style="left:1473.30px;top:87.30px;width:154.40px;height:28.30px;border:1.4px solid #c6c6c6;border-radius:5.5px;background:#fff;"></div>
<div class="abs " style="left:1635.30px;top:87.30px;width:132.10px;height:28.30px;border:1.4px solid #c6c6c6;border-radius:5.5px;background:#fff;"></div>
<div class="abs " style="left:1774.10px;top:87.30px;width:124.70px;height:28.30px;border:1.4px solid #c6c6c6;border-radius:5.5px;background:#fff;"></div>
<div class="t " style="left:1522.90px;top:93.33px;font-size:15.20px;line-height:15.20px;color:#111;letter-spacing:0.355px;-webkit-text-stroke:0.45px #111;transform:scaleX(1.100);transform-origin:0 0;">New Report</div>
<div class="t " style="left:1684.50px;top:93.33px;font-size:15.20px;line-height:15.20px;color:#111;letter-spacing:0.214px;-webkit-text-stroke:0.45px #111;transform:scaleX(1.100);transform-origin:0 0;">Favorites</div>
<div class="t " style="left:1824.40px;top:93.33px;font-size:15.20px;line-height:15.20px;color:#111;letter-spacing:0.127px;-webkit-text-stroke:0.45px #111;transform:scaleX(1.100);transform-origin:0 0;">Recents</div>
<svg class="abs" style="left:0.00px;top:0.00px;" width="1918.00" height="120.00" viewBox="0 0 1918 120" fill="none"><path d="M1497.6 91.4 H1507.8 L1512.4 96 V110.2 Q1512.4 111.4 1511.2 111.4 H1497.6 Q1496.4 111.4 1496.4 110.2 V92.6 Q1496.4 91.4 1497.6 91.4 Z" stroke="#7fd39b" stroke-width="1" fill="#fff"/><path d="M1507.8 91.4 L1512.4 96 H1507.8 Z" fill="#10ab40"/><path d="M1502.4 97 H1506.9 M1502.4 99.6 H1508.9" stroke="#9bdcb0" stroke-width="0.9"/><circle cx="1507.0" cy="106" r="2.6" stroke="#7fd39b" stroke-width="0.9" fill="none"/><path d="M1507.0 103.4 V106 H1509.6" stroke="#7fd39b" stroke-width="0.9" fill="none"/><rect x="1487" y="94.9" width="14.1" height="14.1" fill="#10ab40"/><path d="M1494 98.6 V105.4 M1490.6 102 H1497.4" stroke="#fff" stroke-width="1.5"/><path d="M1658.4 91.4 H1668.6 L1673.2 96 V110.2 Q1673.2 111.4 1672.0 111.4 H1658.4 Q1657.2 111.4 1657.2 110.2 V92.6 Q1657.2 91.4 1658.4 91.4 Z" stroke="#7fd39b" stroke-width="1" fill="#fff"/><path d="M1668.6 91.4 L1673.2 96 H1668.6 Z" fill="#10ab40"/><path d="M1663.2 97 H1667.7 M1663.2 99.6 H1669.7" stroke="#9bdcb0" stroke-width="0.9"/><circle cx="1667.8" cy="106" r="2.6" stroke="#7fd39b" stroke-width="0.9" fill="none"/><path d="M1667.8 103.4 V106 H1670.4" stroke="#7fd39b" stroke-width="0.9" fill="none"/><rect x="1649.2" y="95.7" width="12.9" height="12.5" rx="1.6" fill="#10ab40"/><path d="M1655.6 106 C1651 102.8 1650.6 100.6 1651.6 99.2 C1652.8 97.8 1654.8 98.2 1655.6 99.8 C1656.4 98.2 1658.4 97.8 1659.6 99.2 C1660.6 100.6 1660.2 102.8 1655.6 106 Z" fill="#fff"/><path d="M1798.5 91.4 H1808.7 L1813.3 96 V110.2 Q1813.3 111.4 1812.1 111.4 H1798.5 Q1797.3 111.4 1797.3 110.2 V92.6 Q1797.3 91.4 1798.5 91.4 Z" stroke="#7fd39b" stroke-width="1" fill="#fff"/><path d="M1808.7 91.4 L1813.3 96 H1808.7 Z" fill="#10ab40"/><path d="M1803.3 97 H1807.8 M1803.3 99.6 H1809.8" stroke="#9bdcb0" stroke-width="0.9"/><circle cx="1807.9" cy="106" r="2.6" stroke="#7fd39b" stroke-width="0.9" fill="none"/><path d="M1807.9 103.4 V106 H1810.5" stroke="#7fd39b" stroke-width="0.9" fill="none"/><rect x="1789.1" y="96" width="13" height="13" rx="1.2" fill="#10ab40"/><circle cx="1795.6" cy="102.5" r="3.5" stroke="#fff" stroke-width="1" fill="none"/><path d="M1795.6 100.4 V102.7 L1797.2 103.8" stroke="#fff" stroke-width="0.9" fill="none"/></svg>
<div class="abs " style="left:428.00px;top:295.00px;width:1476.00px;height:600.00px;background:#fff;border-radius:0 11px 0 0;box-shadow:0 1px 13px rgba(0,0,0,0.085);"></div>
<svg class="abs" style="left:444.90px;top:317.20px;" width="11.40" height="11.00" viewBox="0 0 11.4 11" fill="none"><path d="M0.1 0.1 H3.8 L0.1 3.8 Z M11.3 0.1 V3.8 L7.6 0.1 Z M0.1 10.9 V7.2 L3.8 10.9 Z M11.3 10.9 H7.6 L11.3 7.2 Z" fill="#111"/><path d="M1.4 1.4 L4.4 4.4 M10 1.4 L7 4.4 M1.4 9.6 L4.4 6.6 M10 9.6 L7 6.6" stroke="#111" stroke-width="1.4"/></svg>
<div class="t " style="left:469.60px;top:316.39px;font-size:13.60px;line-height:13.60px;color:#333;letter-spacing:0.454px;transform:scaleX(1.100);transform-origin:0 0;">Maximize</div>
<div class="abs " style="left:1526.00px;top:297.00px;width:130.80px;height:28.90px;background:#f5f5f5;border:1px solid #e8e8e8;border-radius:14.5px;"></div>
<div class="t " style="left:1556.00px;top:307.27px;font-size:10.90px;line-height:10.90px;color:#555;letter-spacing:0.545px;-webkit-text-stroke:0.25px #555;transform:scaleX(1.100);transform-origin:0 0;">1 Filter Applied</div>
<svg class="abs" style="left:0.00px;top:0.00px;" width="1918.00" height="873.00" viewBox="0 0 1918 873" fill="none"><path d="M1540.2 306.7 H1550.5 L1546.6 311.4 V315.4 L1544.1 314 V311.4 Z" stroke="#2e3470" stroke-width="1.2" fill="none" stroke-linejoin="round"/><path d="M1680.7 315 C1674.6 310.6 1673.2 307.6 1674.6 305 C1676 302.6 1679.4 302.6 1680.7 305.4 C1682 302.6 1685.4 302.6 1686.8 305 C1688.2 307.6 1686.8 310.6 1680.7 315 Z" stroke="#111" stroke-width="1.5" fill="none" stroke-linejoin="round"/><path d="M1706.4 305.9 H1704.6 Q1703 305.9 1703 307.5 V312.3 Q1703 313.9 1704.6 313.9 H1705.8" stroke="#1c4a40" stroke-width="1.6" fill="none"/><path d="M1706.4 307.8 Q1706.4 305.9 1708.2 305.9 H1709.6 Q1711.4 305.9 1711.4 307.8" stroke="#1c4a40" stroke-width="1.6" fill="none"/><rect x="1706.6" y="309.6" width="8" height="8" rx="1.7" stroke="#1c4a40" stroke-width="1.6" fill="none"/><path d="M1736.2 317.2 H1734 Q1730.8 317.2 1730.8 314 V309 Q1730.8 305.6 1734 305.6 H1739 Q1742.4 305.6 1742.4 309 V310.2" stroke="#14443a" stroke-width="1.5" fill="none"/><path d="M1733 308.2 H1740 M1733 310.4 H1737.4 M1733 312.6 H1736" stroke="#14443a" stroke-width="1"/><circle cx="1740.2" cy="314.5" r="3.4" stroke="#14443a" stroke-width="1.4" fill="#fff"/><path d="M1740.2 312.8 V314.7 H1741.8" stroke="#14443a" stroke-width="1" fill="none"/><circle cx="1769.1" cy="307.8" r="2.2" stroke="#111" stroke-width="1.5" fill="none"/><circle cx="1760.9" cy="311.9" r="2.2" stroke="#111" stroke-width="1.5" fill="none"/><circle cx="1769.1" cy="316" r="2.2" stroke="#111" stroke-width="1.5" fill="none"/><path d="M1762.9 310.9 L1767.1 308.8 M1762.9 312.9 L1767.1 315" stroke="#111" stroke-width="1.5"/><path d="M1794.6 304.6 L1799.8 310 M1786.6 309.6 L1795 317.8 M1795.4 305.6 L1788.6 310.8 M1799 309 L1794 316.4 M1791 313.8 L1785.6 319" stroke="#111" stroke-width="1.5" fill="none" stroke-linecap="round"/><path d="M1839.3 305.6 C1840.6 308.6 1839 312.6 1836 315.4 C1834 317.2 1832.4 318.2 1832.2 317.4 C1832 316.4 1835 314.4 1839 313.4 C1842 312.6 1845.6 312.8 1845.8 313.8 C1846 314.8 1843.4 314.6 1841.4 313.2 C1838.6 311.2 1837.4 307.4 1838 305.8 C1838.3 305 1839 305 1839.3 305.6 Z" stroke="#0f3d33" stroke-width="1.35" fill="none" stroke-linejoin="round"/><path d="M1862.8 305.4 H1869 L1872.6 309 V317.2 Q1872.6 318.4 1871.4 318.4 H1862.8 Q1861.6 318.4 1861.6 317.2 V306.6 Q1861.6 305.4 1862.8 305.4 Z M1869 305.4 V309 H1872.6" stroke="#b3c7c1" stroke-width="1" fill="none"/><path d="M1863.6 313.4 H1870.6" stroke="#c5d4cf" stroke-width="1.4" stroke-dasharray="1.2 0.7"/><rect x="1877.2" y="346.2" width="11.4" height="11.2" rx="1.6" stroke="#123f35" stroke-width="1.4" fill="none"/><path d="M1877.2 350.2 H1888.6 M1881.2 346.2 V357.4" stroke="#123f35" stroke-width="1.3"/><rect x="1877.2" y="380.4" width="11.4" height="11.2" rx="1.6" stroke="#123f35" stroke-width="1.4" fill="none"/><path d="M1877.2 384.4 H1888.6 M1881.2 380.4 V391.6 M1883.2 389 L1886.6 386" stroke="#123f35" stroke-width="1.3"/><path d="M1882 436.6 A5.6 5.6 0 1 0 1888.4 443 H1882 Z" stroke="#222" stroke-width="1.2" fill="none" stroke-linejoin="round"/><path d="M1884 435.9 A5.2 5.2 0 0 1 1889 440.9 H1884 Z" stroke="#222" stroke-width="1.1" fill="none" stroke-linejoin="round"/><path d="M1877.4 469.8 V482 H1889.4" stroke="#123f35" stroke-width="1.4" fill="none"/><path d="M1879.6 479 L1882.8 475.6 L1884.6 477.4 L1888.4 473.4 M1885.8 473 H1888.8 V476" stroke="#123f35" stroke-width="1.3" fill="none" stroke-linejoin="round"/><path d="M1877.4 503.6 V515.6 H1889.4" stroke="#123f35" stroke-width="1.4" fill="none"/><rect x="1880" y="508" width="2.6" height="5.6" stroke="#123f35" stroke-width="1.2" fill="none"/><rect x="1884.8" y="505.4" width="2.6" height="8.2" stroke="#123f35" stroke-width="1.2" fill="none"/><circle cx="1878.8" cy="552.2" r="1.45" fill="#111"/><circle cx="1883.0" cy="552.2" r="1.45" fill="#111"/><circle cx="1887.2" cy="552.2" r="1.45" fill="#111"/><circle cx="1878.8" cy="556.4" r="1.45" fill="#111"/><circle cx="1883.0" cy="556.4" r="1.45" fill="#111"/><circle cx="1887.2" cy="556.4" r="1.45" fill="#111"/><circle cx="1878.8" cy="560.6" r="1.45" fill="#111"/><circle cx="1883.0" cy="560.6" r="1.45" fill="#111"/><circle cx="1887.2" cy="560.6" r="1.45" fill="#111"/></svg>
<svg class="abs" style="left:0.00px;top:0.00px;" width="1918.00" height="873.00" viewBox="0 0 1918 873" fill="none"><path d="M509.5 688.70 H1857.8" stroke="#e3e3e3" stroke-width="1.6"/><path d="M509.5 601.85 H1857.8" stroke="#e9e9e9" stroke-width="1.6"/><path d="M509.5 515.00 H1857.8" stroke="#e9e9e9" stroke-width="1.6"/><path d="M509.5 428.15 H1857.8" stroke="#e9e9e9" stroke-width="1.6"/><path d="M509.5 341.30 H1857.8" stroke="#e9e9e9" stroke-width="1.6"/><path d="M526.23 688.70 V380.70 Q526.23 374.20 532.73 374.20 H570.53 Q577.03 374.20 577.03 380.70 V688.70 Z" fill="#10ab40"/><path d="M551.63 688.70 V694.20" stroke="#dcdcdc" stroke-width="1"/><path d="M610.50 688.70 V651.70 Q610.50 645.20 617.00 645.20 H654.80 Q661.30 645.20 661.30 651.70 V688.70 Z" fill="#10ab40"/><path d="M635.90 688.70 V694.20" stroke="#dcdcdc" stroke-width="1"/><path d="M694.77 688.70 V657.20 Q694.77 650.70 701.27 650.70 H739.07 Q745.57 650.70 745.57 657.20 V688.70 Z" fill="#10ab40"/><path d="M720.17 688.70 V694.20" stroke="#dcdcdc" stroke-width="1"/><path d="M779.04 688.70 V658.80 Q779.04 652.30 785.54 652.30 H823.34 Q829.84 652.30 829.84 658.80 V688.70 Z" fill="#10ab40"/><path d="M804.44 688.70 V694.20" stroke="#dcdcdc" stroke-width="1"/><path d="M863.31 688.70 V682.20 Q863.31 675.70 869.81 675.70 H907.61 Q914.11 675.70 914.11 682.20 V688.70 Z" fill="#10ab40"/><path d="M888.71 688.70 V694.20" stroke="#dcdcdc" stroke-width="1"/><path d="M947.58 688.70 V683.40 Q947.58 676.90 954.08 676.90 H991.88 Q998.38 676.90 998.38 683.40 V688.70 Z" fill="#10ab40"/><path d="M972.98 688.70 V694.20" stroke="#dcdcdc" stroke-width="1"/><path d="M1031.85 688.70 V684.50 Q1031.85 678.00 1038.35 678.00 H1076.15 Q1082.65 678.00 1082.65 684.50 V688.70 Z" fill="#10ab40"/><path d="M1057.25 688.70 V694.20" stroke="#dcdcdc" stroke-width="1"/><path d="M1116.12 688.70 V687.30 Q1116.12 680.80 1122.62 680.80 H1160.42 Q1166.92 680.80 1166.92 687.30 V688.70 Z" fill="#10ab40"/><path d="M1141.52 688.70 V694.20" stroke="#dcdcdc" stroke-width="1"/><path d="M1200.38 688.70 V687.90 Q1200.38 681.40 1206.88 681.40 H1244.68 Q1251.18 681.40 1251.18 687.90 V688.70 Z" fill="#10ab40"/><path d="M1225.78 688.70 V694.20" stroke="#dcdcdc" stroke-width="1"/><path d="M1284.65 688.70 V688.30 Q1284.65 681.80 1291.15 681.80 H1328.95 Q1335.45 681.80 1335.45 688.30 V688.70 Z" fill="#10ab40"/><path d="M1310.05 688.70 V694.20" stroke="#dcdcdc" stroke-width="1"/><path d="M1368.92 688.70 V688.70 Q1368.92 684.20 1373.42 684.20 H1415.22 Q1419.72 684.20 1419.72 688.70 V688.70 Z" fill="#10ab40"/><path d="M1394.32 688.70 V694.20" stroke="#dcdcdc" stroke-width="1"/><path d="M1453.19 688.70 V688.70 Q1453.19 684.60 1457.29 684.60 H1499.89 Q1503.99 684.60 1503.99 688.70 V688.70 Z" fill="#10ab40"/><path d="M1478.59 688.70 V694.20" stroke="#dcdcdc" stroke-width="1"/><path d="M1537.46 688.70 V688.70 Q1537.46 686.80 1539.36 686.80 H1586.36 Q1588.26 686.80 1588.26 688.70 V688.70 Z" fill="#10ab40"/><path d="M1562.86 688.70 V694.20" stroke="#dcdcdc" stroke-width="1"/><path d="M1621.73 688.70 V688.70 Q1621.73 687.10 1623.33 687.10 H1670.93 Q1672.53 687.10 1672.53 688.70 V688.70 Z" fill="#10ab40"/><path d="M1647.13 688.70 V694.20" stroke="#dcdcdc" stroke-width="1"/><path d="M1706.00 688.70 V688.70 Q1706.00 688.00 1706.70 688.00 H1756.10 Q1756.80 688.00 1756.80 688.70 V688.70 Z" fill="#10ab40"/><path d="M1731.40 688.70 V694.20" stroke="#dcdcdc" stroke-width="1"/><path d="M1790.27 688.70 V688.70 Q1790.27 688.20 1790.77 688.20 H1840.57 Q1841.07 688.20 1841.07 688.70 V688.70 Z" fill="#10ab40"/><path d="M1815.67 688.70 V694.20" stroke="#dcdcdc" stroke-width="1"/></svg>
<div class="t " style="left:540.67px;top:704.00px;font-size:13.00px;line-height:13.00px;color:#1d4f45;letter-spacing:0.595px;">113</div>
<div class="t " style="left:628.37px;top:704.00px;font-size:13.00px;line-height:13.00px;color:#1d4f45;letter-spacing:0.630px;">91</div>
<div class="t " style="left:712.64px;top:704.00px;font-size:13.00px;line-height:13.00px;color:#1d4f45;letter-spacing:0.630px;">96</div>
<div class="t " style="left:796.91px;top:704.00px;font-size:13.00px;line-height:13.00px;color:#1d4f45;letter-spacing:0.630px;">94</div>
<div class="t " style="left:881.18px;top:704.00px;font-size:13.00px;line-height:13.00px;color:#1d4f45;letter-spacing:0.630px;">97</div>
<div class="t " style="left:965.45px;top:704.00px;font-size:13.00px;line-height:13.00px;color:#1d4f45;letter-spacing:0.630px;">85</div>
<div class="t " style="left:1049.72px;top:704.00px;font-size:13.00px;line-height:13.00px;color:#1d4f45;letter-spacing:0.630px;">70</div>
<div class="t " style="left:1133.99px;top:704.00px;font-size:13.00px;line-height:13.00px;color:#1d4f45;letter-spacing:0.630px;">98</div>
<div class="t " style="left:1214.82px;top:704.00px;font-size:13.00px;line-height:13.00px;color:#1d4f45;letter-spacing:0.595px;">110</div>
<div class="t " style="left:1299.09px;top:704.00px;font-size:13.00px;line-height:13.00px;color:#1d4f45;letter-spacing:0.595px;">116</div>
<div class="t " style="left:1383.84px;top:704.00px;font-size:13.00px;line-height:13.00px;color:#1d4f45;letter-spacing:0.601px;">111</div>
<div class="t " style="left:1467.63px;top:704.00px;font-size:13.00px;line-height:13.00px;color:#1d4f45;letter-spacing:0.595px;">112</div>
<div class="t " style="left:1551.41px;top:704.00px;font-size:13.00px;line-height:13.00px;color:#1d4f45;letter-spacing:0.590px;">102</div>
<div class="t " style="left:1639.60px;top:704.00px;font-size:13.00px;line-height:13.00px;color:#1d4f45;letter-spacing:0.630px;">79</div>
<div class="t " style="left:1723.87px;top:704.00px;font-size:13.00px;line-height:13.00px;color:#1d4f45;letter-spacing:0.630px;">95</div>
<div class="t " style="left:1808.14px;top:704.00px;font-size:13.00px;line-height:13.00px;color:#1d4f45;letter-spacing:0.630px;">90</div>
<div class="t " style="left:483.44px;top:682.36px;font-size:12.80px;line-height:12.80px;color:#1d4f45;letter-spacing:0.015px;">0</div>
<div class="t " style="left:478.92px;top:595.51px;font-size:12.80px;line-height:12.80px;color:#1d4f45;letter-spacing:0.477px;">5K</div>
<div class="t " style="left:475.11px;top:508.66px;font-size:12.80px;line-height:12.80px;color:#1d4f45;letter-spacing:0.496px;">10K</div>
<div class="t " style="left:475.11px;top:421.81px;font-size:12.80px;line-height:12.80px;color:#1d4f45;letter-spacing:0.496px;">15K</div>
<div class="t " style="left:475.11px;top:334.06px;font-size:12.80px;line-height:12.80px;color:#1d4f45;letter-spacing:0.496px;">20K</div>
<div class="t " style="left:1121.50px;top:738.57px;font-size:14.80px;line-height:14.80px;color:#1d4f45;letter-spacing:1.057px;">Account Number</div>
<div class="t" style="left:377.50px;top:509.50px;width:130px;height:16px;font-size:14.6px;line-height:16px;color:#1d4f45;letter-spacing:0.72px;transform:rotate(-90deg);transform-origin:center center;text-align:center">Invoiced_cost($)</div>
<div class="abs " style="left:509.50px;top:768.00px;width:1348.50px;height:26.60px;background:#cdeedb;"></div>
<div class="abs " style="left:509.50px;top:766.80px;width:1255.20px;height:28.20px;background:#cceeda;"></div>
<svg class="abs" style="left:509.50px;top:766.00px;" width="1350.00" height="30.00" viewBox="0 0 1350 30" fill="none"><path d="M5 2 C25 8 50 21 80 24.6 C200 25.4 400 25 450 25.5 C500 27 560 28 700 28.2 H1348" stroke="#a9cdb6" stroke-width="1" fill="none"/></svg>
<div class="abs " style="left:503.50px;top:766.90px;width:12.10px;height:27.90px;background:#f4f4f4;border:1px solid #cfcfcf;border-radius:2.8px;"></div>
<div class="abs " style="left:507.20px;top:774.20px;width:1.00px;height:13.00px;background:#b4b4b4;"></div>
<div class="abs " style="left:510.90px;top:774.20px;width:1.00px;height:13.00px;background:#b4b4b4;"></div>
<div class="abs " style="left:1856.60px;top:767.60px;width:8.00px;height:27.20px;background:#f4f4f4;border:1px solid #cfcfcf;border-radius:2.5px;"></div>
<div class="abs " style="left:1859.40px;top:773.00px;width:1.00px;height:16.00px;background:#c2c2c2;"></div>
<div class="abs " style="left:1861.60px;top:773.00px;width:1.00px;height:16.00px;background:#c2c2c2;"></div>
<div class="t " style="left:518.30px;top:773.90px;font-size:13.00px;line-height:13.00px;color:#86a394;letter-spacing:0.333px;">113</div>
<div class="t " style="left:1843.00px;top:775.24px;font-size:12.00px;line-height:12.00px;color:#7f8f86;letter-spacing:-1.920px;-webkit-text-stroke:0.30px #7f8f86;">90</div>
<div class="abs " style="left:1915.00px;top:68.00px;width:5.00px;height:805.00px;background:#cfcfcf;"></div>
<div class="abs " style="left:1915.00px;top:68.00px;width:5.00px;height:756.40px;background:#828282;border-radius:0 0 3px 3px;"></div>
<div class="abs" style="left:1638px;top:803.2px;width:280px;height:70px;overflow:hidden">
<div class="abs " style="left:158.10px;top:-11.30px;width:72.00px;height:72.00px;border-radius:50%;background:#fff;border:4.8px solid #e7e7e7;box-shadow:0 4px 40px 18px rgba(0,0,0,0.035);"></div>
</div>
<svg class="abs" style="left:1800.00px;top:800.00px;" width="60.00" height="60.00" viewBox="0 0 60 60" fill="none"><path d="M20.6 10.2 C14 9.5 10.2 14.5 10.9 19.5 C11.6 23.5 14.5 26 17.6 26.6 Z" fill="#00453a"/><path d="M33 12.6 C26.5 12 22.6 17 23.3 22 C24 26 27 28.2 30.2 28.8 Z" fill="#00453a"/><path d="M26.6 36.4 C34 35.6 41 33 46.8 29.9 C48.6 36.5 45.5 44.5 37.5 45.7 C32.5 46 28.2 42 26.6 36.4 Z" fill="#00d54a"/></svg>
</div>
</body></html>
